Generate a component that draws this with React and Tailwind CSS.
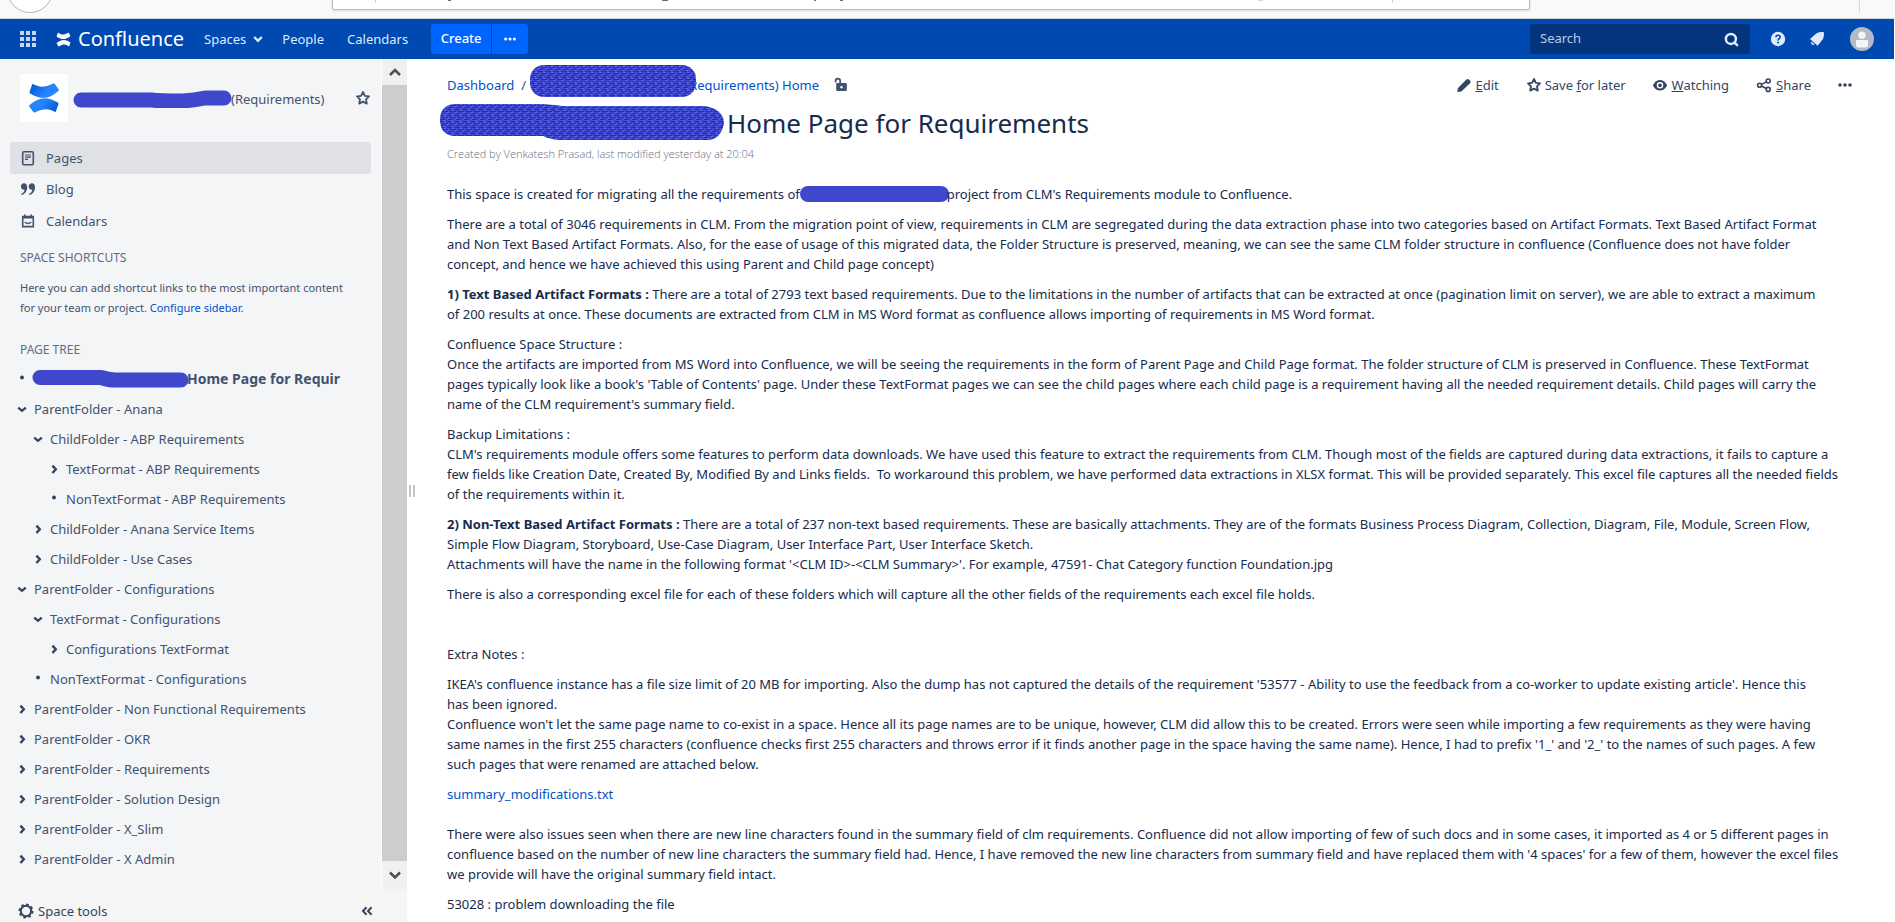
import React from "react";
import { Search } from "lucide-react";

const tree = [
  { depth: 0, kind: "open", label: "ParentFolder - Anana" },
  { depth: 1, kind: "open", label: "ChildFolder - ABP Requirements" },
  { depth: 2, kind: "closed", label: "TextFormat - ABP Requirements" },
  { depth: 2, kind: "leaf", label: "NonTextFormat - ABP Requirements" },
  { depth: 1, kind: "closed", label: "ChildFolder - Anana Service Items" },
  { depth: 1, kind: "closed", label: "ChildFolder - Use Cases" },
  { depth: 0, kind: "open", label: "ParentFolder - Configurations" },
  { depth: 1, kind: "open", label: "TextFormat - Configurations" },
  { depth: 2, kind: "closed", label: "Configurations TextFormat" },
  { depth: 1, kind: "leaf", label: "NonTextFormat - Configurations" },
  { depth: 0, kind: "closed", label: "ParentFolder - Non Functional Requirements" },
  { depth: 0, kind: "closed", label: "ParentFolder - OKR" },
  { depth: 0, kind: "closed", label: "ParentFolder - Requirements" },
  { depth: 0, kind: "closed", label: "ParentFolder - Solution Design" },
  { depth: 0, kind: "closed", label: "ParentFolder - X_Slim" },
  { depth: 0, kind: "closed", label: "ParentFolder - X Admin" },
];

const indents = ["pl-[14px]", "pl-[30px]", "pl-[46px]"];

function Marker({ kind }) {
  if (kind === "leaf") {
    return (
      <svg className="w-4 h-4 shrink-0" viewBox="0 0 16 16" aria-hidden="true">
        <circle cx="8" cy="6.5" r="2" fill="#344563" />
      </svg>
    );
  }
  const d = kind === "open" ? "M4.2 6.6 L8 9.8 L11.8 6.6" : "M6.4 4.6 L9.8 8.3 L6.4 12";
  return (
    <svg className="w-4 h-4 shrink-0" viewBox="0 0 16 16" aria-hidden="true">
      <path d={d} fill="none" stroke="#344563" strokeWidth="2.4" />
    </svg>
  );
}

function Star({ className }) {
  return (
    <svg className={className} viewBox="0 0 16 16" aria-hidden="true">
      <path d="M8 2 L9.9 5.8 L14 6.3 L11 9.3 L11.8 13.6 L8 11.6 L4.2 13.6 L5 9.3 L2 6.3 L6.1 5.8 Z" fill="none" stroke="currentColor" strokeWidth="1.8" strokeLinejoin="round" />
    </svg>
  );
}

function Dots({ className }) {
  return (
    <svg className={className} viewBox="0 0 16 16" aria-hidden="true">
      <circle cx="3" cy="8" r="1.8" fill="currentColor" />
      <circle cx="8" cy="8" r="1.8" fill="currentColor" />
      <circle cx="13" cy="8" r="1.8" fill="currentColor" />
    </svg>
  );
}

function BrowserStrip() {
  return (
    <div className="h-[19px] shrink-0 relative overflow-hidden bg-[#f9f9fa] border-b border-[#d4d4d4]">
      <div className="absolute left-[7px] -top-[33px] w-[46px] h-[46px] rounded-full border border-[#b5b5b5] bg-white" />
      <div className="absolute left-[332px] right-[365px] -top-[20px] h-[30px] border border-[#b9b9b9] bg-white rounded-[2px] shadow-sm" />
      <div className="absolute left-[375px] top-0 w-px h-[3px] bg-[#d0d0d0]" />
      <div className="absolute left-[448px] top-0 w-[3px] h-px bg-[#6b6b6b]" />
      <div className="absolute left-[662px] top-0 w-[6px] h-px bg-[#6b6b6b]" />
      <div className="absolute left-[814px] top-0 w-[2px] h-px bg-[#6b6b6b]" />
      <div className="absolute left-[840px] top-0 w-[3px] h-px bg-[#6b6b6b]" />
      <div className="absolute left-[1258px] top-0 w-[5px] h-px bg-[#d8d8d8]" />
      <div className="absolute left-[1392px] top-0 w-px h-[3px] bg-[#d0d0d0]" />
      <div className="absolute right-[35px] top-0 w-px h-[13px] bg-[#d7d7db]" />
    </div>
  );
}

function TopNav() {
  return (
    <header className="h-10 shrink-0 mr-px flex items-center bg-[#0049b0] text-[#deebff] text-[13px] pl-[19px] pr-[20px]">
      <button aria-label="Applications" className="w-[18px] h-[18px]">
        <svg viewBox="0 0 18 18" fill="#c3d6f3">
          {[1, 7, 13].map((y) => [1, 7, 13].map((x) => <rect key={x + "-" + y} x={x} y={y} width="4" height="4" />))}
        </svg>
      </button>
      <a href="#home" className="ml-[19px] flex items-center gap-[7px] text-white text-[20px] leading-6">
        <svg className="w-[15px] h-[15px]" viewBox="0 0 30 30" aria-hidden="true">
          <path d="M4 1 C10 6 15 7 25 1 L29 8 C18 17 9 15 1 9 Z" fill="#fff" />
          <path d="M26 29 C20 24 15 23 5 29 L1 22 C12 13 21 15 29 21 Z" fill="#fff" />
        </svg>
        Confluence
      </a>
      <nav className="ml-[20px] pt-[2px] flex items-center">
        <a href="#spaces" className="flex items-center gap-1">
          Spaces
          <svg className="w-4 h-4" viewBox="0 0 16 16" aria-hidden="true">
            <path d="M4.2 5 L8 8.8 L11.8 5" fill="none" stroke="currentColor" strokeWidth="2.4" />
          </svg>
        </a>
        <a href="#people" className="ml-[16px]">People</a>
        <a href="#calendars" className="ml-[23px]">Calendars</a>
      </nav>
      <div className="ml-[23px] flex gap-px text-white">
        <button className="h-[30px] w-[60px] bg-[#0065ff] rounded-l-[3px] font-medium">Create</button>
        <button aria-label="More create options" className="h-[30px] w-[36px] bg-[#0065ff] rounded-r-[3px] flex items-center justify-center">
          <Dots className="w-[14px] h-[14px]" />
        </button>
      </div>
      <div className="ml-auto flex items-center">
        <label className="h-[30px] w-[220px] bg-[#04357c] rounded-[3px] flex items-center pl-[10px] pr-[11px]">
          <input aria-label="Search" placeholder="Search" className="min-w-0 flex-1 bg-transparent outline-none text-[13px] placeholder:text-[#b8cbea]" />
          <Search size={15} strokeWidth={4} color="#deebff" />
        </label>
        <button aria-label="Help" className="ml-[20px]">
          <svg className="w-4 h-4" viewBox="0 0 16 16">
            <circle cx="8" cy="8" r="7.2" fill="#deebff" />
            <path d="M5.9 6.3 C5.9 3.5 10.2 3.5 10.2 6.2 C10.2 7.7 8.1 7.8 8.1 9.4" fill="none" stroke="#0049b0" strokeWidth="1.6" />
            <circle cx="8.1" cy="11.6" r="1" fill="#0049b0" />
          </svg>
        </button>
        <button aria-label="Notifications" className="ml-[23px]">
          <svg className="w-4 h-4" viewBox="0 0 16 16" fill="#deebff">
            <path d="M1 8 L7.6 2.2 C10 1 12.5 0.8 14.8 1.2 C15.2 3.6 14.8 6.4 13.6 8.6 L8.6 14.8 Z" />
            <path d="M2.2 10.4 L5.6 13.6 C3.8 14.8 1.4 13 2.2 10.4 Z" />
          </svg>
        </button>
        <button aria-label="Profile" className="ml-[25px]">
          <svg className="w-6 h-6" viewBox="0 0 24 24">
            <circle cx="12" cy="12" r="12" fill="#b3bac5" />
            <circle cx="12" cy="8.2" r="3.7" fill="#f4f5f7" />
            <path d="M6 13 H18 V18 Q18 20.5 15.5 20.5 H8.5 Q6 20.5 6 18 Z" fill="#f4f5f7" />
          </svg>
        </button>
      </div>
    </header>
  );
}

function Sidebar() {
  return (
    <aside className="w-[407px] shrink-0 flex flex-col bg-[#f4f5f7] text-[#42526e] text-[13px] leading-5">
      <div className="flex flex-1">
        <div className="flex-1 min-w-0 pt-[15px] pb-[14px]">
          <div className="flex items-center pl-[20px] pr-[10px]">
            <span className="w-12 h-12 bg-white rounded-[3px] flex items-center justify-center">
              <svg className="w-[30px] h-[30px]" viewBox="0 0 28 30" preserveAspectRatio="none" aria-hidden="true">
                <defs>
                  <linearGradient id="lg1" x1="0" y1="0" x2="1" y2="0.4"><stop offset="0" stopColor="#0052cc" /><stop offset="0.7" stopColor="#2684ff" /></linearGradient>
                  <linearGradient id="lg2" x1="1" y1="1" x2="0" y2="0.6"><stop offset="0" stopColor="#0052cc" /><stop offset="0.7" stopColor="#2684ff" /></linearGradient>
                </defs>
                <path d="M3.2 0.8 C9 3.8 13 5.6 22.6 0.6 Q23.6 0 24.2 1.2 L27.8 6.4 Q28.2 7.2 27.2 8.2 C19 15.6 12 17.4 1 10.4 Q0.2 9.8 0.6 8.6 Z" fill="url(#lg1)" />
                <path d="M24.8 29.2 C19 26.2 15 24.4 5.4 29.4 Q4.4 30 3.8 28.8 L0.2 23.6 Q-0.2 22.8 0.8 21.8 C9 14.4 16 12.6 27 19.6 Q27.8 20.2 27.4 21.4 Z" fill="url(#lg2)" />
              </svg>
            </span>
            <svg className="ml-[5px] w-[160px] h-5 shrink-0" viewBox="0 0 160 20" role="img" aria-label="Redacted">
              <path d="M8 12 H78 Q86 13 110 13 Q122 12 132 10 H151" fill="none" stroke="#3f48cc" strokeWidth="15" strokeLinecap="round" strokeLinejoin="round" />
            </svg>
            <span className="-ml-[2px] pt-[2px]">(Requirements)</span>
            <button aria-label="Favourite space" className="ml-auto"><Star className="w-4 h-4" /></button>
          </div>

          <nav className="mt-[20px] pl-[10px] pr-[10px]">
            <a href="#pages" className="h-8 flex items-center gap-[10px] rounded-[3px] bg-[#dfe1e5] pl-[10px]">
              <svg className="w-4 h-4" viewBox="0 0 16 16" aria-hidden="true">
                <rect x="2.7" y="1.7" width="10.6" height="13" rx="1.2" fill="none" stroke="currentColor" strokeWidth="1.6" />
                <path d="M5 5 H11 M5 7.2 H11 M5 9.4 H8" stroke="currentColor" strokeWidth="1.2" />
              </svg>
              Pages
            </a>
            <a href="#blog" className="h-[30px] flex items-center gap-[10px] pl-[10px]">
              <svg className="w-4 h-4" viewBox="0 0 16 16" aria-hidden="true" fill="currentColor">
                <path d="M4 2.2 C6 2.2 7.2 3.7 7.2 6.2 C7.2 10.4 4.8 13.2 1.6 14 L1.2 12.8 C3.2 12 4.3 10.6 4.6 8.7 C2.6 9 0.9 7.6 0.9 5.4 C0.9 3.5 2.2 2.2 4 2.2 Z" />
                <path d="M11.8 2.2 C13.8 2.2 15 3.7 15 6.2 C15 10.4 12.6 13.2 9.4 14 L9 12.8 C11 12 12.1 10.6 12.4 8.7 C10.4 9 8.7 7.6 8.7 5.4 C8.7 3.5 10 2.2 11.8 2.2 Z" />
              </svg>
              Blog
            </a>
            <a href="#calendars" className="h-[34px] flex items-center gap-[10px] pl-[10px]">
              <svg className="w-4 h-4" viewBox="0 0 16 16" aria-hidden="true">
                <path d="M2.7 4 V13.6 H13.3 V4" fill="none" stroke="currentColor" strokeWidth="1.6" />
                <path d="M2 2.8 H14 V5.4 H2 Z M4 1.6 H5.6 V4 H4 Z M10.4 1.6 H12 V4 H10.4 Z" fill="currentColor" />
                <path d="M4.6 8.8 Q8 12.2 11.4 8.8" fill="none" stroke="currentColor" strokeWidth="1.2" />
              </svg>
              Calendars
            </a>
          </nav>

          <h2 className="mt-[10px] pl-5 text-xs leading-5 text-[#5e6c84]">SPACE SHORTCUTS</h2>
          <p className="mt-[10px] pl-5 text-[11px] leading-5">
            Here you can add shortcut links to the most important content<br />for your team or project. <a href="#configure" className="text-[#0052cc]">Configure sidebar.</a>
          </p>
          <h2 className="mt-[22px] pl-5 text-xs leading-5 text-[#5e6c84]">PAGE TREE</h2>

          <ul className="mt-[4px]">
            <li className="h-[30px] flex items-center pl-[14px] font-bold text-sm leading-5">
              <Marker kind="leaf" />
              <svg className="ml-px w-[159px] h-5 shrink-0" viewBox="0 0 159 20" role="img" aria-label="Redacted">
                <path d="M9 8.5 H70 Q78 11 84 11 H150" fill="none" stroke="#3f48cc" strokeWidth="15" strokeLinecap="round" strokeLinejoin="round" />
              </svg>
              <a href="#home-page" className="-ml-[3px]">Home Page for Requir</a>
            </li>
            {tree.map((n) => (
              <li key={n.label} className={"h-[30px] flex items-center gap-1 " + indents[n.depth]}>
                <Marker kind={n.kind} />
                <a href="#page">{n.label}</a>
              </li>
            ))}
          </ul>
        </div>
        <div className="w-[26px] shrink-0 flex flex-col bg-[#cdcdcd] border-l border-white">
          <div className="h-[26px] bg-[#f0f0f0] flex items-center justify-center">
            <svg className="w-4 h-4" viewBox="0 0 16 16" aria-hidden="true"><path d="M3 11 L8 6 L13 11" fill="none" stroke="#505050" strokeWidth="2.6" /></svg>
          </div>
          <div className="mt-auto h-[28px] bg-[#f0f0f0] flex items-center justify-center">
            <svg className="w-4 h-4" viewBox="0 0 16 16" aria-hidden="true"><path d="M3 5.5 L8 10.5 L13 5.5" fill="none" stroke="#505050" strokeWidth="2.6" /></svg>
          </div>
        </div>
      </div>
      <div className="h-[33px] shrink-0 flex items-center pl-[18px] pr-[32px] pt-[10px] text-[#344563] bg-[#f5f5f5]">
        <button className="flex items-center gap-1">
          <svg className="w-4 h-4" viewBox="0 0 16 16" aria-hidden="true">
            <circle cx="8" cy="8" r="5.2" fill="none" stroke="currentColor" strokeWidth="2" />
            <circle cx="8" cy="8" r="6.6" fill="none" stroke="currentColor" strokeWidth="1.8" strokeDasharray="2.6 2.58" />
          </svg>
          Space tools
        </button>
        <button aria-label="Collapse sidebar" className="ml-auto">
          <svg className="w-4 h-4" viewBox="0 0 16 16"><path d="M7.5 4.2 L4 8 L7.5 11.8 M12.5 4.2 L9 8 L12.5 11.8" fill="none" stroke="currentColor" strokeWidth="2" /></svg>
        </button>
      </div>
    </aside>
  );
}

function Article() {
  return (
    <main className="flex-1 min-w-0 pl-[30px] pr-[46px] pt-4 text-[13px] leading-5 text-[#172b4d]">
      <div className="flex items-center h-5">
        <nav className="flex items-center text-[#0052cc]">
          <a href="#dashboard">Dashboard</a>
          <span className="ml-[7px] text-[#42526e]">/</span>
          <svg className="relative z-10 ml-[4px] mt-[-20px] mb-[-12px] w-[166px] h-8" viewBox="0 0 166 32" role="img" aria-label="Redacted">
            <rect x="0" y="0" width="166" height="32" rx="14" fill="url(#scribble)" />
          </svg>
          <a href="#space-home" className="-ml-[7px]">Requirements) Home</a>
          <svg className="ml-[14px] w-4 h-4 text-[#42526e]" viewBox="0 0 16 16" aria-hidden="true">
            <path d="M2.6 5.4 V4 Q2.6 1.6 4.9 1.6 Q7.2 1.6 7.2 4 V6.4" fill="none" stroke="currentColor" strokeWidth="1.7" />
            <path fillRule="evenodd" d="M4.2 6 H12.8 Q13.8 6 13.8 7 V13 Q13.8 14 12.8 14 H4.2 Q3.2 14 3.2 13 V7 Q3.2 6 4.2 6 Z M8.5 8.8 a1.3 1.3 0 1 0 0.01 0 Z" fill="currentColor" />
          </svg>
        </nav>
        <div className="ml-auto -mr-[4px] flex items-center text-[#344563]">
          <button className="flex items-center gap-[3px]">
            <svg className="w-4 h-4" viewBox="0 0 16 16" fill="currentColor" aria-hidden="true">
              <path d="M1.2 15 L2 11 L10.4 2.6 Q11.6 1.4 12.8 2.4 L14.2 3.8 Q15.2 5 14 6.2 L5.4 14.4 Z" />
            </svg>
            <span><u>E</u>dit</span>
          </button>
          <button className="ml-[27px] flex items-center gap-[3px]">
            <Star className="w-4 h-4" />
            <span>Save <u>f</u>or later</span>
          </button>
          <button className="ml-[26px] flex items-center gap-[4px]">
            <svg className="w-4 h-4" viewBox="0 0 16 16" aria-hidden="true">
              <path d="M0.8 8.4 Q4 3 8 3 Q12 3 15.2 8.4 Q12 13.6 8 13.6 Q4 13.6 0.8 8.4 Z" fill="currentColor" />
              <circle cx="8" cy="8.3" r="2.6" fill="none" stroke="#fff" strokeWidth="1.4" />
            </svg>
            <span><u>W</u>atching</span>
          </button>
          <button className="ml-[27px] flex items-center gap-[4px]">
            <svg className="w-4 h-4" viewBox="0 0 16 16" fill="none" stroke="currentColor" strokeWidth="1.6" aria-hidden="true">
              <circle cx="3.6" cy="8.2" r="2" /><circle cx="12.2" cy="4" r="2" /><circle cx="12.2" cy="12.4" r="2" />
              <path d="M5.4 7.4 L10.4 4.9 M5.4 9 L10.4 11.5" />
            </svg>
            <span><u>S</u>hare</span>
          </button>
          <button aria-label="More actions" className="ml-[26px]"><Dots className="w-4 h-4" /></button>
        </div>
      </div>

      <div className="mt-2 flex items-center h-10">
        <svg className="-ml-[8px] w-[286px] h-10" viewBox="0 0 286 40" role="img" aria-label="Redacted">
          <defs>
            <pattern id="scribble" width="8" height="6" patternUnits="userSpaceOnUse">
              <rect width="8" height="6" fill="#3d47cf" />
              <path d="M0 0.5 H5 M3 2.5 H8 M0 2.5 H1 M1 4.5 H6" stroke="#252da6" strokeWidth="1" />
              <path d="M5 1.5 H7 M0 3.5 H2 M4 5.5 H6" stroke="#656ee6" strokeWidth="1" />
            </pattern>
          </defs>
          <path d="M14 1 H104 Q116 2 124 3 H266 Q284 6 285 20 Q282 37 268 37 H120 Q110 36 104 33 H14 Q1 31 1 17 Q1 3 14 1 Z" fill="url(#scribble)" />
        </svg>
        <h1 className="ml-[2px] text-[26px] leading-8">Home Page for Requirements</h1>
      </div>
      <p className="mt-[1px] text-[11px] leading-5 font-light text-[#5e6c84] font-['Open_Sans','Noto_Sans',sans-serif]">Created by Venkatesh Prasad, last modified yesterday at 20:04</p>

      <div className="mt-5 flex flex-col gap-[10px]">
        <p className="flex items-center">
          This space is created for migrating all the requirements of
          <span role="img" aria-label="Redacted" className="w-[149px] h-4 rounded-full bg-[#3f48cc]" />
          <span className="-ml-[2px]">project from CLM's Requirements module to Confluence.</span>
        </p>
        <p>There are a total of 3046 requirements in CLM. From the migration point of view, requirements in CLM are segregated during the data extraction phase into two categories based on Artifact Formats. Text Based Artifact Format<br />and Non Text Based Artifact Formats. Also, for the ease of usage of this migrated data, the Folder Structure is preserved, meaning, we can see the same CLM folder structure in confluence (Confluence does not have folder<br />concept, and hence we have achieved this using Parent and Child page concept)</p>
        <p><strong>1) Text Based Artifact Formats :</strong> There are a total of 2793 text based requirements. Due to the limitations in the number of artifacts that can be extracted at once (pagination limit on server), we are able to extract a maximum<br />of 200 results at once. These documents are extracted from CLM in MS Word format as confluence allows importing of requirements in MS Word format.</p>
        <p>Confluence Space Structure :<br />Once the artifacts are imported from MS Word into Confluence, we will be seeing the requirements in the form of Parent Page and Child Page format. The folder structure of CLM is preserved in Confluence. These TextFormat<br />pages typically look like a book's 'Table of Contents' page. Under these TextFormat pages we can see the child pages where each child page is a requirement having all the needed requirement details. Child pages will carry the<br />name of the CLM requirement's summary field.</p>
        <p>Backup Limitations :<br />CLM's requirements module offers some features to perform data downloads. We have used this feature to extract the requirements from CLM. Though most of the fields are captured during data extractions, it fails to capture a<br />few fields like Creation Date, Created By, Modified By and Links fields.&nbsp; To workaround this problem, we have performed data extractions in XLSX format. This will be provided separately. This excel file captures all the needed fields<br />of the requirements within it.</p>
        <p><strong>2) Non-Text Based Artifact Formats :</strong> There are a total of 237 non-text based requirements. These are basically attachments. They are of the formats Business Process Diagram, Collection, Diagram, File, Module, Screen Flow,<br />Simple Flow Diagram, Storyboard, Use-Case Diagram, User Interface Part, User Interface Sketch.<br />Attachments will have the name in the following format '&lt;CLM ID&gt;-&lt;CLM Summary&gt;'. For example, 47591- Chat Category function Foundation.jpg</p>
        <p>There is also a corresponding excel file for each of these folders which will capture all the other fields of the requirements each excel file holds.</p>
        <p className="mt-[30px]">Extra Notes :</p>
        <p>IKEA's confluence instance has a file size limit of 20 MB for importing. Also the dump has not captured the details of the requirement '53577 - Ability to use the feedback from a co-worker to update existing article'. Hence this<br />has been ignored.<br />Confluence won't let the same page name to co-exist in a space. Hence all its page names are to be unique, however, CLM did allow this to be created. Errors were seen while importing a few requirements as they were having<br />same names in the first 255 characters (confluence checks first 255 characters and throws error if it finds another page in the space having the same name). Hence, I had to prefix '1_' and '2_' to the names of such pages. A few<br />such pages that were renamed are attached below.</p>
        <p><a href="#attachment" className="text-[#0052cc]">summary_modifications.txt</a></p>
        <p className="mt-[10px]">There were also issues seen when there are new line characters found in the summary field of clm requirements. Confluence did not allow importing of few of such docs and in some cases, it imported as 4 or 5 different pages in<br />confluence based on the number of new line characters the summary field had. Hence, I have removed the new line characters from summary field and have replaced them with '4 spaces' for a few of them, however the excel files<br />we provide will have the original summary field intact.</p>
        <p>53028 : problem downloading the file</p>
      </div>
    </main>
  );
}

export default function App() {
  return (
    <div className="min-h-screen flex flex-col bg-white font-['Noto_Sans','Open_Sans',sans-serif]">
      <BrowserStrip />
      <TopNav />
      <div className="flex flex-1">
        <Sidebar />
        <div className="w-[10px] shrink-0 flex items-center justify-center">
          <button aria-label="Resize sidebar" className="w-[6px] h-3 border-x-2 border-[#c1c7d0]" />
        </div>
        <Article />
      </div>
    </div>
  );
}
